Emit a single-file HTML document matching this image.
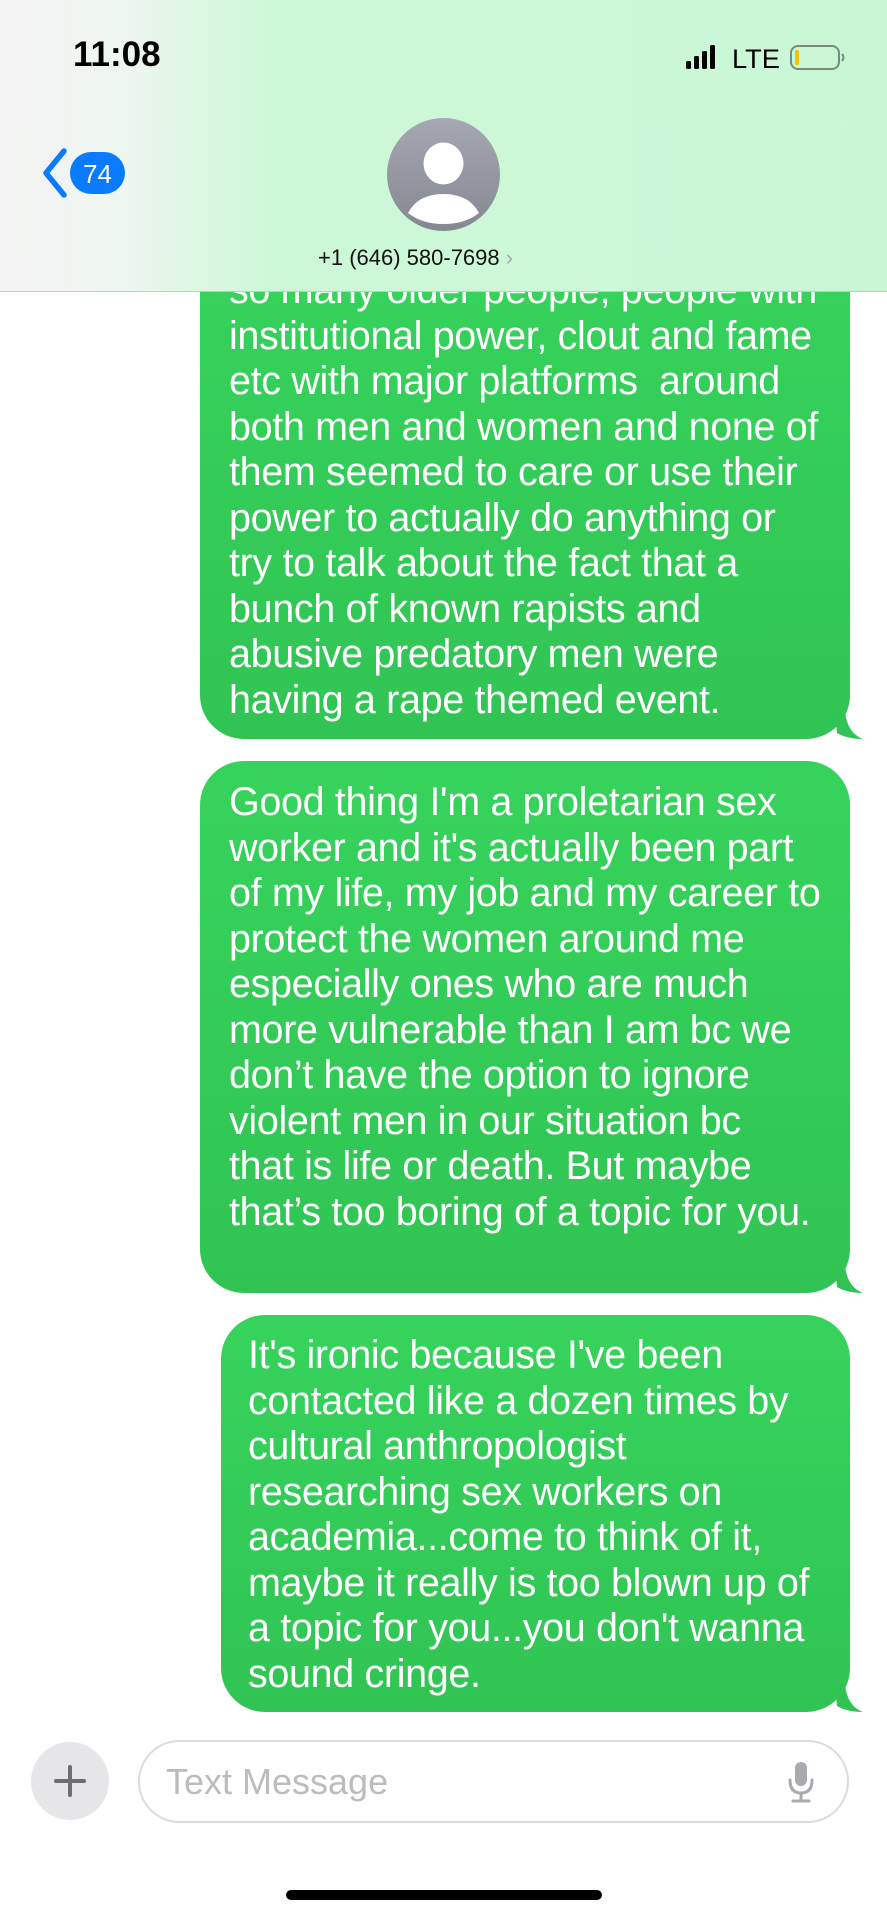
<!DOCTYPE html>
<html><head><meta charset="utf-8"><style>
*{margin:0;padding:0;box-sizing:border-box}
body{width:887px;height:1919px;background:#fff;position:relative;overflow:hidden;font-family:"Liberation Sans",sans-serif}
.b{position:absolute;background:linear-gradient(#36d35c,#31c454);border-radius:44px;color:#fff;font-size:39.5px;line-height:45.5px;letter-spacing:-0.35px;white-space:nowrap}
.tail{position:absolute;width:30px;height:28px}
.hdr{position:absolute;left:0;top:0;width:887px;height:292px;background:linear-gradient(90deg,#f3f3f3 0%,#eef6f0 14%,#cdf8d8 30%,#c9f7d6 100%);border-bottom:1.5px solid #c8c8c8}
</style></head><body>
<div class="b" style="left:200px;top:250px;width:650px;height:489px;border-radius:0 0 44px 44px">
<div style="position:absolute;left:29px;top:18px">so many older people, people with<br>institutional power, clout and fame<br>etc with major platforms&nbsp; around<br>both men and women and none of<br>them seemed to care or use their<br>power to actually do anything or<br>try to talk about the fact that a<br>bunch of known rapists and<br>abusive predatory men were<br>having a rape themed event.</div></div>
<svg class="tail" style="left:835px;top:711px" viewBox="0 0 30 28"><path d="M0 0 L10 0 Q12 22 28 28 Q12 28 2 22 Z" fill="#31c454"/></svg>
<div class="b" style="left:200px;top:761px;width:650px;height:532px">
<div style="position:absolute;left:29px;top:19px">Good thing I'm a proletarian sex<br>worker and it's actually been part<br>of my life, my job and my career to<br>protect the women around me<br>especially ones who are much<br>more vulnerable than I am bc we<br>don’t have the option to ignore<br>violent men in our situation bc<br>that is life or death. But maybe<br>that’s too boring of a topic for you.</div></div>
<svg class="tail" style="left:835px;top:1265px" viewBox="0 0 30 28"><path d="M0 0 L10 0 Q12 22 28 28 Q12 28 2 22 Z" fill="#31c454"/></svg>
<div class="b" style="left:221px;top:1315px;width:629px;height:397px">
<div style="position:absolute;left:27px;top:18px">It's ironic because I've been<br>contacted like a dozen times by<br>cultural anthropologist<br>researching sex workers on<br>academia...come to think of it,<br>maybe it really is too blown up of<br>a topic for you...you don't wanna<br>sound cringe.</div></div>
<svg class="tail" style="left:835px;top:1684px" viewBox="0 0 30 28"><path d="M0 0 L10 0 Q12 22 28 28 Q12 28 2 22 Z" fill="#31c454"/></svg>

<div class="hdr"></div>
<div style="position:absolute;left:73px;top:35px;font-size:35px;font-weight:bold;color:#000">11:08</div>
<svg style="position:absolute;left:686px;top:44px" width="160" height="28" viewBox="0 0 160 28">
<rect x="0" y="17" width="5" height="8" rx="1.5"/><rect x="8" y="12" width="5" height="13" rx="1.5"/><rect x="16" y="7" width="5" height="18" rx="1.5"/><rect x="24" y="1" width="5" height="24" rx="1.5"/>
<text x="46" y="24" font-family="Liberation Sans" font-size="27" textLength="48" lengthAdjust="spacingAndGlyphs">LTE</text>
<rect x="105" y="2" width="48" height="23" rx="7" fill="none" stroke="#7a8a7e" stroke-width="2"/>
<rect x="109" y="6" width="4" height="15" rx="1.5" fill="#f2c400"/>
<path d="M156 10 q3 3 0 7" stroke="#7a8a7e" stroke-width="2" fill="none"/></svg>
<svg style="position:absolute;left:36px;top:148px" width="95" height="50" viewBox="0 0 95 50">
<path d="M28 3 L10 25 L28 47" stroke="#0a7aff" stroke-width="5.5" fill="none" stroke-linecap="round" stroke-linejoin="round"/>
<rect x="34" y="4" width="55" height="42" rx="21" fill="#0a7aff"/>
<text x="61.5" y="35" text-anchor="middle" font-family="Liberation Sans" font-size="26" fill="#fff">74</text></svg>
<svg style="position:absolute;left:387px;top:118px" width="113" height="113" viewBox="0 0 113 113">
<defs><linearGradient id="g" x1="0" y1="0" x2="0" y2="1"><stop offset="0" stop-color="#a5a8b2"/><stop offset="1" stop-color="#858791"/></linearGradient></defs>
<circle cx="56.5" cy="56.5" r="56.5" fill="url(#g)"/>
<ellipse cx="56.5" cy="45.5" rx="20" ry="21" fill="#fff"/>
<path d="M21 95 Q31 76 56.5 76 Q82 76 92 95 Q78 106 56.5 106 Q35 106 21 95Z" fill="#fff"/></svg>
<div style="position:absolute;left:318px;top:245px;font-size:22px;color:#111">+1 (646) 580-7698 <span style="color:#aaa">›</span></div>

<div style="position:absolute;left:31px;top:1742px;width:78px;height:78px;border-radius:50%;background:#e6e6e8"></div>
<svg style="position:absolute;left:54px;top:1765px" width="32" height="32"><path d="M16 2V30M2 16H30" stroke="#6d6d72" stroke-width="4" stroke-linecap="round"/></svg>
<div style="position:absolute;left:138px;top:1740px;width:711px;height:83px;border:2px solid #dcdcdc;border-radius:42px"></div>
<div style="position:absolute;left:166px;top:1761px;font-size:36px;color:#bcbcbe">Text Message</div>
<svg style="position:absolute;left:787px;top:1762px" width="28" height="42" viewBox="0 0 28 42"><rect x="8" y="0" width="12" height="24" rx="6" fill="#a9a9ae"/><path d="M3 18 Q3 31 14 31 Q25 31 25 18 M14 31V38 M6 39H22" stroke="#a9a9ae" stroke-width="3" fill="none" stroke-linecap="round"/></svg>
<div style="position:absolute;left:286px;top:1890px;width:316px;height:10px;border-radius:5px;background:#000"></div>
</body></html>
